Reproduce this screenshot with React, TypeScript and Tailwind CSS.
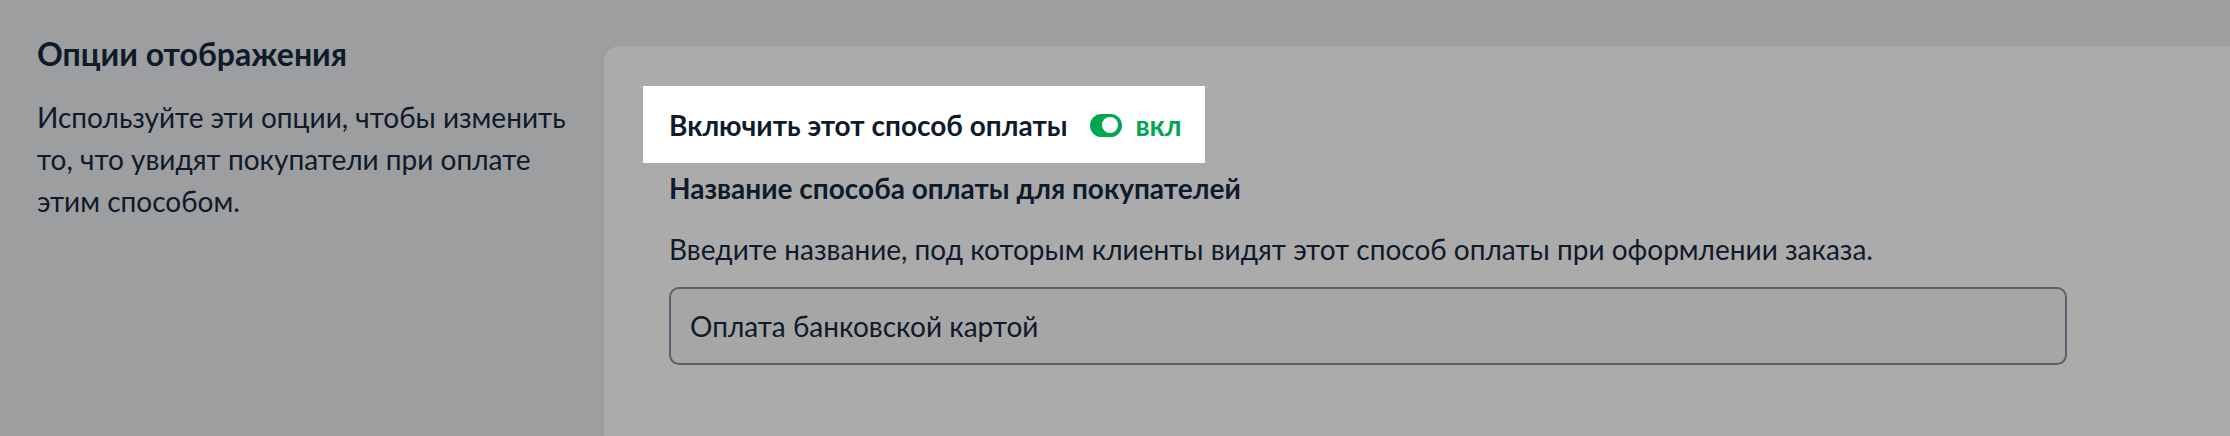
import React from 'react'

const textColor = 'text-[#0f1a2b]'

function Toggle() {
  return (
    <span className="flex items-center gap-[14px]">
      <span className="flex h-[23px] w-[32px] items-center justify-end rounded-full bg-[#00a650] pr-[4px]">
        <span className="block h-[16px] w-[16px] rounded-full bg-white" />
      </span>
      <span className="font-bold text-[#00a650]">вкл</span>
    </span>
  )
}

export default function App() {
  return (
    <div
      className={`flex h-[436px] w-full items-start gap-[27px] overflow-hidden bg-[#9d9ea0] pl-[37px] pt-[34px] ${textColor}`}
      style={{ fontFamily: 'Lato, "Noto Sans", sans-serif' }}
    >
      {/* Left column */}
      <div className="w-[540px] shrink-0">
        <h2 className="text-[32px] font-bold leading-[40px]">Опции отображения</h2>
        <p className="mt-[22px] text-[28px] leading-[42px]">
          Используйте эти опции, чтобы изменить то, что увидят покупатели при оплате этим способом.
        </p>
      </div>

      {/* Card */}
      <div className="mt-[12px] h-[500px] w-[1700px] shrink-0 rounded-[16px] bg-[#ababab] pl-[39px] pt-[40px] text-[28px] leading-[42px]">
        <div className="flex w-fit items-center gap-[22px] bg-white pb-[17px] pl-[26px] pr-[23px] pt-[18px]">
          <span className="font-bold">Включить этот способ оплаты</span>
          <Toggle />
        </div>

        <div className="px-[26px]">
          <label htmlFor="title" className="mt-[4px] block font-bold">
            Название способа оплаты для покупателей
          </label>
          <p className="mt-[19px]">
            Введите название, под которым клиенты видят этот способ оплаты при оформлении заказа.
          </p>
          <input
            id="title"
            type="text"
            defaultValue="Оплата банковской картой"
            className="mt-[17px] block h-[78px] w-[1398px] rounded-[10px] border-2 border-[#566170] bg-[#a6a6a6] px-[19px] text-[28px] outline-none"
          />
        </div>
      </div>
    </div>
  )
}
